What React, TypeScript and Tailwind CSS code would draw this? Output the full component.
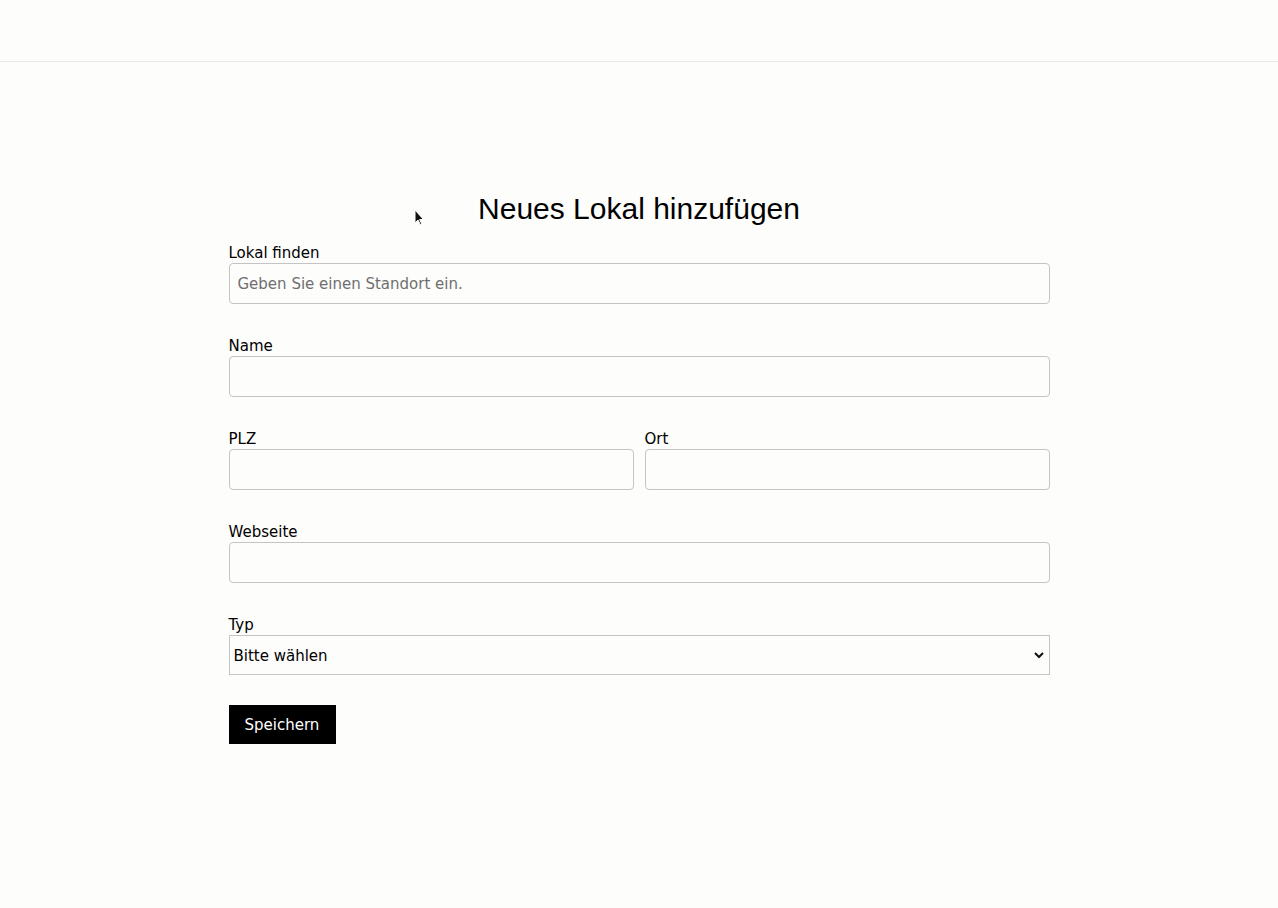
import React from 'react';

const labelCls = "block text-[15px] leading-[18px] text-black pt-[1px] mb-[1px]";
const inputCls =
  "block w-full h-[41px] rounded-[4px] border border-[#c4c4c4] bg-[#fdfdfb] px-2 text-[15px] text-black placeholder:text-[#6f6f6f] outline-none";

const Field: React.FC<{ label: string; placeholder?: string }> = ({ label, placeholder }) => (
  <div className="flex-1">
    <label className={labelCls}>{label}</label>
    <input className={inputCls} placeholder={placeholder} />
  </div>
);

const App: React.FC = () => {
  return (
    <div className="min-h-[908px] bg-[#fdfdfb] font-['DejaVu_Sans',sans-serif] relative">
      {/* top bar */}
      <div className="h-[62px] border-b border-[#e8e8e6]" />

      <main className="w-[821px] mx-auto pt-[130px]">
        <h1 className="text-center font-['Liberation_Sans',Arial,sans-serif] text-[30px] leading-[34px] text-black mb-[17px]">
          Neues Lokal hinzufügen
        </h1>

        <form className="flex flex-col gap-[32px]" onSubmit={(e) => e.preventDefault()}>
          <Field label="Lokal finden" placeholder="Geben Sie einen Standort ein." />
          <Field label="Name" />
          <div className="flex gap-[11px]">
            <Field label="PLZ" />
            <Field label="Ort" />
          </div>
          <Field label="Webseite" />
          <div>
            <label className={labelCls}>Typ</label>
            <div className="relative">
              <select className="block w-full h-[40px] appearance-none border border-[#c4c4c4] bg-[#fdfdfb] pl-[4px] pt-[2px] text-[15px] text-black outline-none">
                <option>Bitte wählen</option>
              </select>
              <svg
                className="absolute right-[6px] top-1/2 -translate-y-1/2 pointer-events-none"
                width="10"
                height="7"
                viewBox="0 0 10 7"
              >
                <path d="M1 1.5 L5 5.5 L9 1.5" fill="none" stroke="#111" strokeWidth="2" />
              </svg>
            </div>
          </div>
          <div className="-mt-[2px]">
            <button
              type="submit"
              className="h-[39px] pl-4 pr-[17px] pt-[2px] bg-black text-white text-[15px]"
            >
              Speichern
            </button>
          </div>
        </form>
      </main>

      {/* mouse pointer */}
      <svg className="absolute left-[414px] top-[209px]" width="11" height="17" viewBox="0 0 11 17">
        <path d="M1 1 L1 14 L4 11 L6.5 16 L8 15.3 L5.6 10.5 L9.5 10.5 Z" fill="#111" stroke="#fff" strokeWidth="1" />
      </svg>
    </div>
  );
};

export default App;
